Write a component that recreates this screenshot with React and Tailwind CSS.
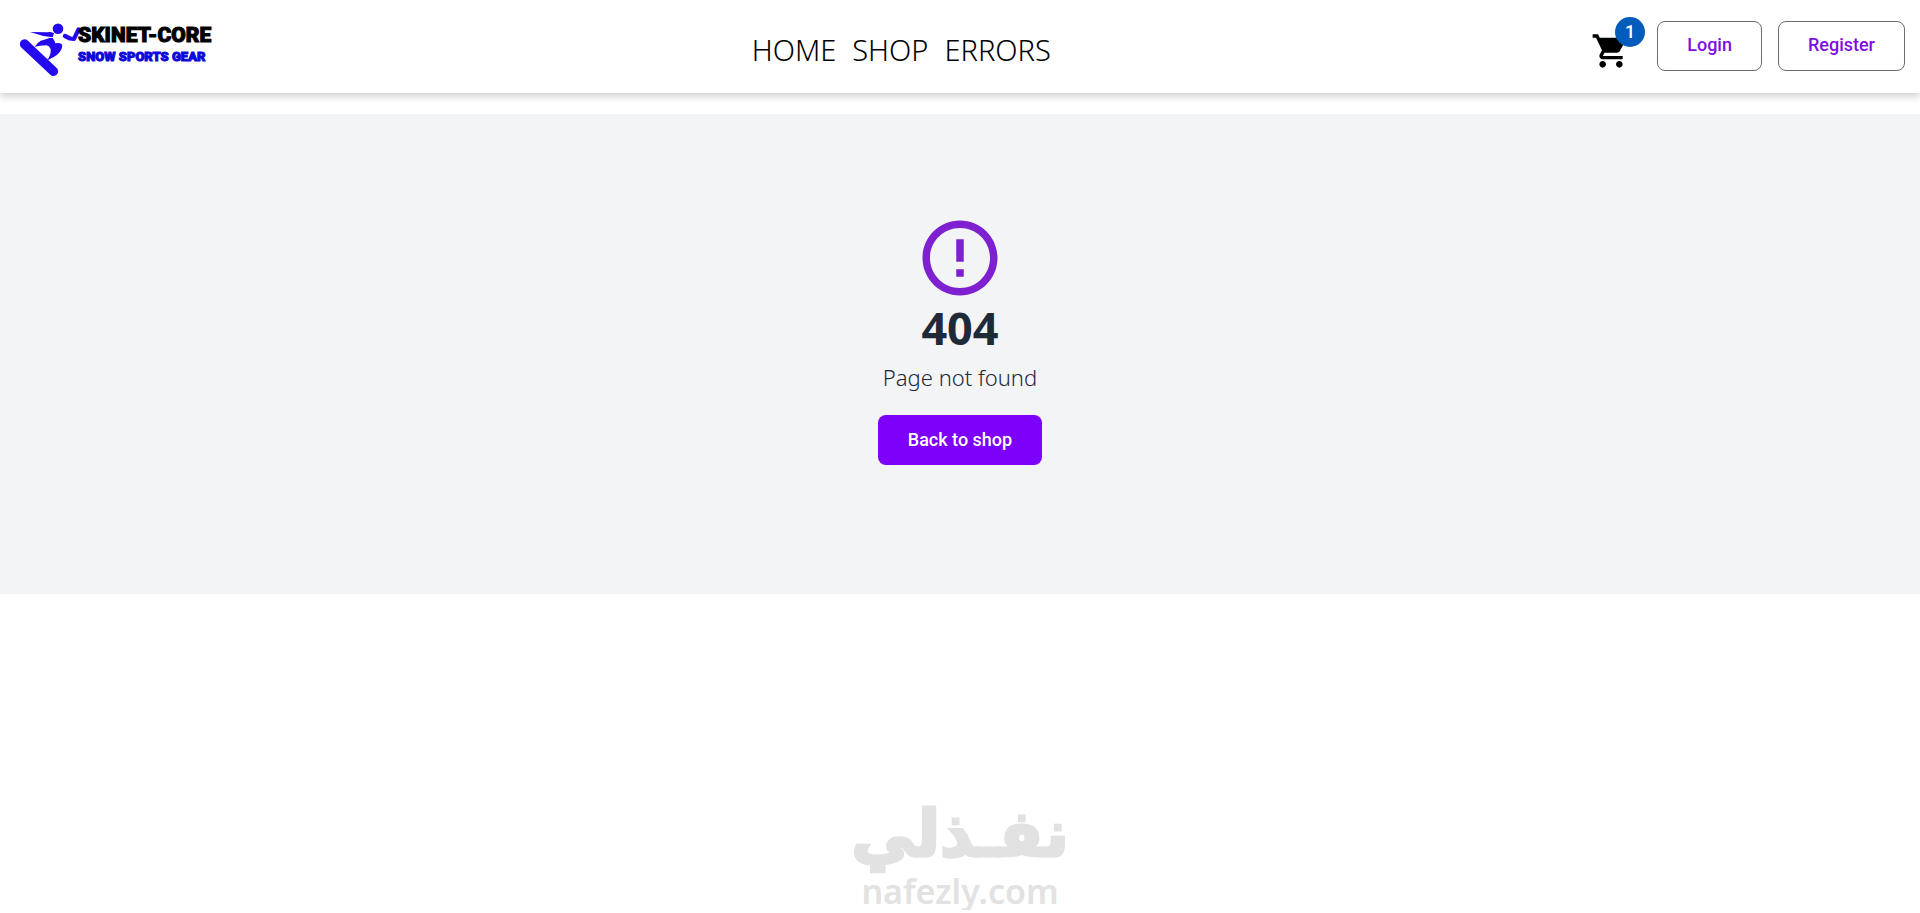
import { MdShoppingCart, MdErrorOutline } from "react-icons/md";

function Logo() {
  return (
    <a href="#home" aria-label="Skinet-Core home" className="flex items-start text-[#2408f0]">
      <svg viewBox="0 0 60 54" className="mt-2 h-[54px] w-[60px]" fill="currentColor" aria-hidden="true">
        <circle cx="38" cy="5.700" r="5.300" />
        <path d="M4.500 21 L33.500 48.300" stroke="currentColor" strokeWidth="9.300" strokeLinecap="round" />
        <path d="M10 9 L27 9.300 Q31 8.300 34 10.300 L32.700 14.300 L23.300 13 Z" />
        <path d="M14.700 23.700 Q17 20 20.700 17.700 Q25 16.500 29.300 15 L32.700 15 Q34.500 17.500 35.300 20.300 Q38 19.500 40 20.300 Q42.800 21.500 42.300 23 Q42 26 40 28.700 Q37 32.500 33.300 34.300 L26 38 Q29 35.500 30 32 Q31 29 30.700 26.300 Q29.500 23 26.700 22.300 Q20 22.500 14.700 23.700 Z" />
        <path d="M45 13 L50 15.500 L54 15.800 L58.500 6.500" fill="none" stroke="currentColor" strokeWidth="4.200" strokeLinecap="round" strokeLinejoin="round" />
      </svg>
      <span className="-ml-0.5 flex flex-col pt-2 font-['Roboto',sans-serif] font-black">
        <span className="text-[21px] leading-6 text-black [-webkit-text-stroke:1px_black]">SKINET-CORE</span>
        <span className="text-[13px] leading-5 text-[#0b08d8] [-webkit-text-stroke:1px_#0b08d8]">SNOW SPORTS GEAR</span>
      </span>
    </a>
  );
}

const outlined =
  "h-[50px] rounded-lg border border-[#6b6b6b] px-[29px] pb-1 font-['Roboto',sans-serif] text-[18px] font-medium text-[#7d0fe0]";

export default function App() {
  return (
    <div className="bg-white font-['Noto_Sans','Open_Sans',sans-serif]">
      <header className="flex h-[93px] items-start justify-between pr-[15px] pl-5 pt-[15px] shadow-[0_3px_8px_rgba(0,0,0,0.2)]">
        <Logo />
        <nav className="flex gap-4 pt-3 text-[29px] leading-[45px] font-light text-black">
          <a href="#home">HOME</a>
          <a href="#shop">SHOP</a>
          <a href="#errors">ERRORS</a>
        </nav>
        <div className="flex items-center gap-4 pt-1.5">
          <a href="#cart" aria-label="Cart" className="relative mr-2.5 pt-2.5 text-black">
            <MdShoppingCart className="size-10" />
            <span className="absolute -top-1 left-6 flex size-[30px] items-center justify-center rounded-full bg-[#005cbb] pb-0.5 font-['Roboto',sans-serif] text-[18px] font-medium text-white">
              1
            </span>
          </a>
          <button className={outlined}>Login</button>
          <button className={outlined}>Register</button>
        </div>
      </header>

      <main className="mt-[21px] flex h-[480px] flex-col items-center bg-[#f3f4f6] pt-[99px]">
        <MdErrorOutline className="size-[90px] text-[#7e1fd0]" />
        <h1 className="text-[45px] leading-[50px] font-bold text-[#1f2937]">404</h1>
        <p className="mt-1.5 text-[22px] leading-[36px] font-light text-[#1f2937]">Page not found</p>
        <button className="mt-5 h-[50px] rounded-lg bg-[#7d00fa] px-[30px] pb-0.5 font-['Roboto',sans-serif] text-[18px] font-medium text-white">
          Back to shop
        </button>
      </main>

      <footer className="flex flex-col items-center pt-[202px] text-[#e2e2e2]">
        <span lang="ar" dir="rtl" className="font-['DejaVu_Sans',sans-serif] text-[64px] leading-[76px] font-bold [-webkit-text-stroke:3px_#e2e2e2]">نفـذلي</span>
        <span className="text-[34px] leading-[38px] font-semibold">nafezly.com</span>
      </footer>
    </div>
  );
}
